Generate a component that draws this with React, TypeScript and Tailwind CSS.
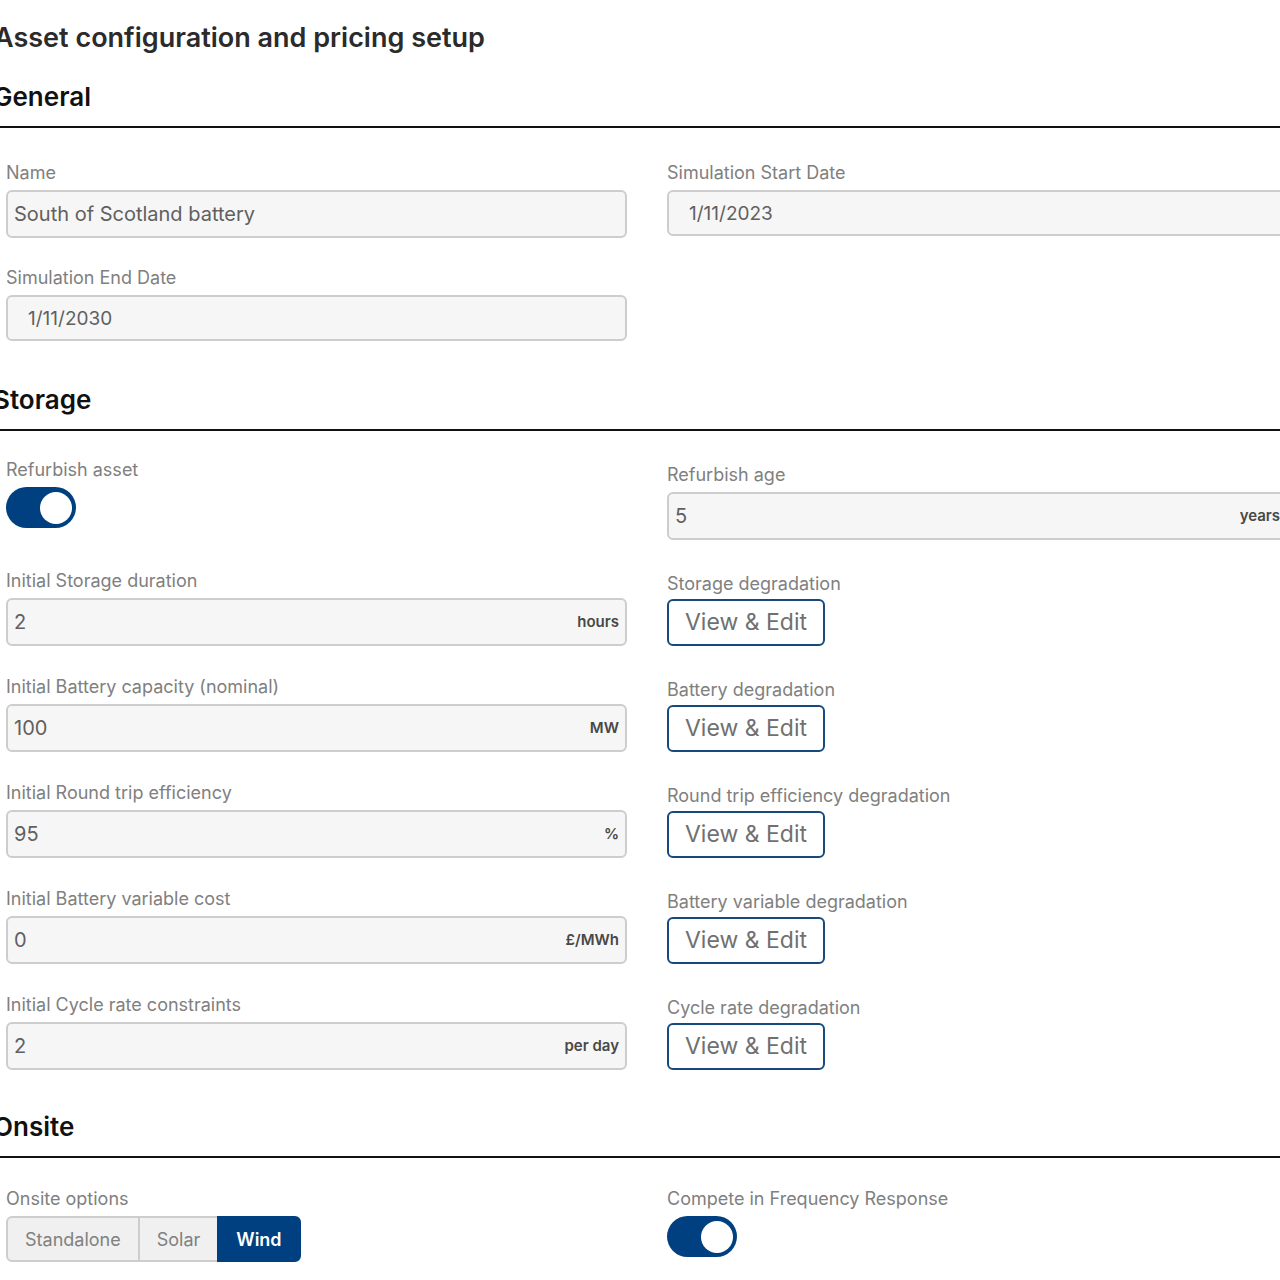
import { useId, useState } from "react";
import clsx from "clsx";

const storageRows = [
  { label: "Initial Storage duration", value: "2", unit: "hours", action: "Storage degradation" },
  { label: "Initial Battery capacity (nominal)", value: "100", unit: "MW", action: "Battery degradation" },
  { label: "Initial Round trip efficiency", value: "95", unit: "%", action: "Round trip efficiency degradation" },
  { label: "Initial Battery variable cost", value: "0", unit: "£/MWh", action: "Battery variable degradation" },
  { label: "Initial Cycle rate constraints", value: "2", unit: "per day", action: "Cycle rate degradation" },
];

const onsiteOptions = ["Standalone", "Solar", "Wind"];

const labelClass = "block text-[18px] leading-6 text-[#808080]";

function SectionTitle({ children }: { children: React.ReactNode }) {
  return (
    <h2 className="border-b-2 border-[#111] pb-[13px] text-[26px] leading-8 font-semibold text-[#111]">
      <span className="-ml-[7px]">{children}</span>
    </h2>
  );
}

function TextField({ label, value, unit }: { label: string; value: string; unit?: string }) {
  const id = useId();
  return (
    <div>
      <label htmlFor={id} className={labelClass}>{label}</label>
      <div className="mt-[5px] flex h-12 items-center rounded-md border-2 border-[#cdcdcd] bg-[#f6f6f6] px-1.5">
        <input
          id={id}
          defaultValue={value}
          className="min-w-0 flex-1 bg-transparent text-[20px] text-[#606060] outline-none"
        />
        {unit && <span className="text-[15px] leading-6 font-semibold text-[#484848]">{unit}</span>}
      </div>
    </div>
  );
}

function DateField({ label, value }: { label: string; value: string }) {
  const id = useId();
  return (
    <div>
      <label htmlFor={id} className={labelClass}>{label}</label>
      <input
        id={id}
        defaultValue={value}
        className="mt-[5px] block h-[46px] w-full rounded-md border-2 border-[#cdcdcd] bg-[#f6f6f6] px-5 text-[19px] text-[#606060] outline-none"
      />
    </div>
  );
}

function Toggle({ label }: { label: string }) {
  const id = useId();
  return (
    <div>
      <label htmlFor={id} className={labelClass}>{label}</label>
      <input
        id={id}
        type="checkbox"
        role="switch"
        defaultChecked
        className="mt-[5px] flex h-[41px] w-[70px] appearance-none items-center rounded-full bg-[#b5b5b5] px-1 before:size-8 before:rounded-full before:bg-white checked:justify-end checked:bg-[#004080]"
      />
    </div>
  );
}

function EditAction({ label }: { label: string }) {
  const id = useId();
  return (
    <div>
      <span id={id} className={labelClass}>{label}</span>
      <button
        type="button"
        aria-describedby={id}
        className="mt-[3px] block h-[47px] w-[158px] rounded-md border-2 border-[#164a7c] bg-white text-[23px] text-[#707070]"
      >
        View & Edit
      </button>
    </div>
  );
}

export default function App() {
  const [onsite, setOnsite] = useState("Wind");

  return (
    <main className="min-h-screen overflow-x-hidden bg-white pt-[22px] font-['Inter',sans-serif]">
      <h1 className="-ml-1.5 text-[27px] leading-8 font-semibold text-[#2b2b2b]">
        Asset configuration and pricing setup
      </h1>

      <section className="mt-[27px]">
        <SectionTitle>General</SectionTitle>
        <div className="mt-[33px] -mr-2 ml-1.5 grid grid-cols-2 items-start gap-x-10 gap-y-7">
          <TextField label="Name" value="South of Scotland battery" />
          <DateField label="Simulation Start Date" value="1/11/2023" />
          <DateField label="Simulation End Date" value="1/11/2030" />
        </div>
      </section>

      <section className="mt-[43px]">
        <SectionTitle>Storage</SectionTitle>
        <div className="mt-[27px] -mr-2 ml-1.5 grid grid-cols-2 items-end gap-x-10 gap-y-[29px]">
          <div className="pb-3">
            <Toggle label="Refurbish asset" />
          </div>
          <TextField label="Refurbish age" value="5" unit="years" />
          {storageRows.map((row) => (
            <div key={row.label} className="contents">
              <TextField label={row.label} value={row.value} unit={row.unit} />
              <EditAction label={row.action} />
            </div>
          ))}
        </div>
      </section>

      <section className="mt-[41px]">
        <SectionTitle>Onsite</SectionTitle>
        <div className="mt-[29px] -mr-2 ml-1.5 grid grid-cols-2 items-start gap-x-10">
          <div>
            <span id="onsite-options" className={labelClass}>Onsite options</span>
            <div role="group" aria-labelledby="onsite-options" className="mt-[5px] flex h-[46px]">
              {onsiteOptions.map((option) => (
                <button
                  key={option}
                  type="button"
                  aria-pressed={onsite === option}
                  onClick={() => setOnsite(option)}
                  className={clsx(
                    "-mr-0.5 border-2 px-[17px] text-[18px] first:rounded-l-md last:rounded-r-md",
                    onsite === option
                      ? "z-10 border-[#004080] bg-[#004080] font-semibold text-white"
                      : "border-[#cdcdcd] bg-[#f0f0f0] text-[#808080]"
                  )}
                >
                  {option}
                </button>
              ))}
            </div>
          </div>
          <Toggle label="Compete in Frequency Response" />
        </div>
      </section>
    </main>
  );
}
